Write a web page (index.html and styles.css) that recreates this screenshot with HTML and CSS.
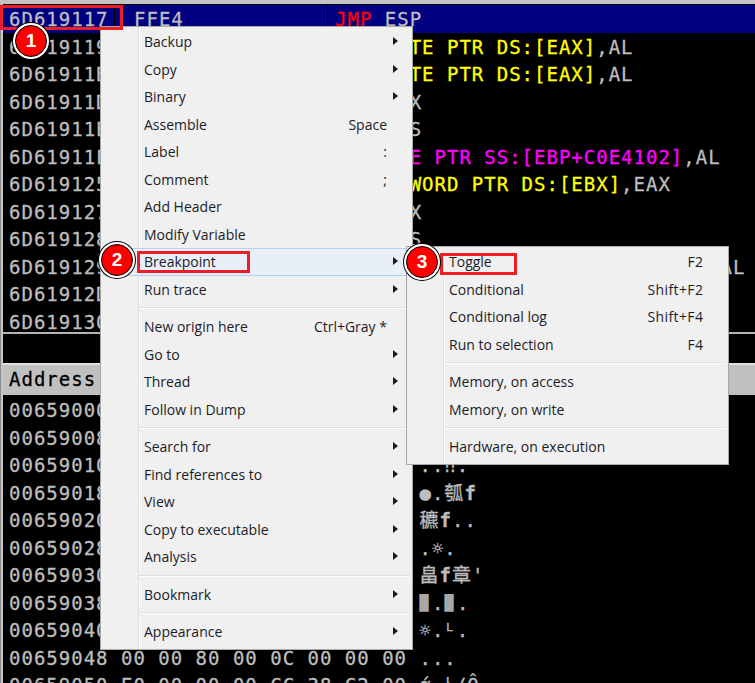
FILE: index.html
```html
<!DOCTYPE html>
<html lang="en">
<head>
<meta charset="utf-8">
<title>Debugger</title>
<link rel="stylesheet" href="styles.css">
</head>
<body>
<main class="window">
  <section class="cpu">
    <div class="row selected"><span class="addr">6D619117</span><span class="hex">FFE4</span><span class="asm"><span class="red">JMP</span> ESP</span></div>
    <div class="row"><span class="addr">6D619119</span><span class="hex">0000</span><span class="asm"><span class="yel">ADD BYTE PTR DS:[EAX]</span>,AL</span></div>
    <div class="row"><span class="addr">6D61911B</span><span class="hex">0000</span><span class="asm"><span class="yel">ADD BYTE PTR DS:[EAX]</span>,AL</span></div>
    <div class="row"><span class="addr">6D61911D</span><span class="hex">40</span><span class="asm">INC EAX</span></div>
    <div class="row"><span class="addr">6D61911E</span><span class="hex">06</span><span class="asm">PUSH ES</span></div>
    <div class="row"><span class="addr">6D61911F</span><span class="hex">0885 02418EC0</span><span class="asm"><span class="mag">OR BYTE PTR SS:[EBP+C0E4102]</span>,AL</span></div>
    <div class="row"><span class="addr">6D619125</span><span class="hex">8503</span><span class="asm"><span class="yel">TEST DWORD PTR DS:[EBX]</span>,EAX</span></div>
    <div class="row"><span class="addr">6D619127</span><span class="hex">40</span><span class="asm">INC EAX</span></div>
    <div class="row"><span class="addr">6D619128</span><span class="hex">06</span><span class="asm">PUSH ES</span></div>
    <div class="row"><span class="addr">6D619129</span><span class="hex">0885 02418EC0</span><span class="asm"><span class="mag">ADD BYTE PTR SS:[EBP+C0E41020]</span>,AL</span></div>
    <div class="row"><span class="addr">6D61912D</span><span class="hex">0000</span><span class="asm"></span></div>
    <div class="row"><span class="addr">6D619130</span><span class="hex">0000</span><span class="asm"></span></div>
  </section>
  <div class="spacer"></div>
  <header class="dump-head">Address</header>
  <section class="dump">
    <div class="line">00659000 00 00 00 00 00 00 00 00 ........</div>
    <div class="line">00659008 00 00 00 00 00 00 00 00 ........</div>
    <div class="line">00659010 00 00 00 00 00 00 00 00 ..‼.</div>
    <div class="line">00659018 00 00 00 00 00 00 00 00 ●.瓠<b class="wide">f</b></div>
    <div class="line">00659020 00 00 00 00 00 00 00 00 穮<b class="wide">f</b>..</div>
    <div class="line">00659028 00 00 00 00 00 00 00 00 .☼.</div>
    <div class="line">00659030 00 00 00 00 00 00 00 00 畠<b class="wide">f</b>章'</div>
    <div class="line">00659038 00 00 00 00 00 00 00 00 <span class="blk">█</span>.<span class="blk">█</span>.</div>
    <div class="line">00659040 00 00 00 00 00 00 00 00 ☼.ᴸ.</div>
    <div class="line">00659048 00 00 80 00 0C 00 00 00 ...</div>
    <div class="line">00659050 E0 00 00 00 CC 38 C2 00 ά.ﾄ/Ô</div>
  </section>
</main>

<nav class="menu main-menu">
  <div class="item"><span class="label">Backup</span><i class="arrow"></i></div>
  <div class="item"><span class="label">Copy</span><i class="arrow"></i></div>
  <div class="item"><span class="label">Binary</span><i class="arrow"></i></div>
  <div class="item"><span class="label">Assemble</span><span class="key">Space</span></div>
  <div class="item"><span class="label">Label</span><span class="key">:</span></div>
  <div class="item"><span class="label">Comment</span><span class="key">;</span></div>
  <div class="item"><span class="label">Add Header</span></div>
  <div class="item"><span class="label">Modify Variable</span></div>
  <div class="item active"><span class="label">Breakpoint</span><i class="arrow"></i></div>
  <div class="item"><span class="label">Run trace</span><i class="arrow"></i></div>
  <div class="sep"></div>
  <div class="item"><span class="label">New origin here</span><span class="key">Ctrl+Gray *</span></div>
  <div class="item"><span class="label">Go to</span><i class="arrow"></i></div>
  <div class="item"><span class="label">Thread</span><i class="arrow"></i></div>
  <div class="item"><span class="label">Follow in Dump</span><i class="arrow"></i></div>
  <div class="sep"></div>
  <div class="item"><span class="label">Search for</span><i class="arrow"></i></div>
  <div class="item"><span class="label">Find references to</span><i class="arrow"></i></div>
  <div class="item"><span class="label">View</span><i class="arrow"></i></div>
  <div class="item"><span class="label">Copy to executable</span><i class="arrow"></i></div>
  <div class="item"><span class="label">Analysis</span><i class="arrow"></i></div>
  <div class="sep"></div>
  <div class="item"><span class="label">Bookmark</span><i class="arrow"></i></div>
  <div class="sep"></div>
  <div class="item"><span class="label">Appearance</span><i class="arrow"></i></div>
</nav>

<nav class="menu sub-menu">
  <div class="item"><span class="label">Toggle</span><span class="key">F2</span></div>
  <div class="item"><span class="label">Conditional</span><span class="key">Shift+F2</span></div>
  <div class="item"><span class="label">Conditional log</span><span class="key">Shift+F4</span></div>
  <div class="item"><span class="label">Run to selection</span><span class="key">F4</span></div>
  <div class="sep"></div>
  <div class="item"><span class="label">Memory, on access</span></div>
  <div class="item"><span class="label">Memory, on write</span></div>
  <div class="sep"></div>
  <div class="item"><span class="label">Hardware, on execution</span></div>
</nav>

<div class="box box-1"></div>
<div class="box box-2"></div>
<div class="box box-3"></div>
<div class="badge badge-1">1</div>
<div class="badge badge-2">2</div>
<div class="badge badge-3">3</div>
</body>
</html>
```

FILE: styles.css
```css
html, body {
  margin: 0;
  padding: 0;
  height: 683px;
  overflow: hidden;
  background: #000;
}

body {
  position: relative;
  width: 755px;
}

.window {
  height: 683px;
  box-sizing: border-box;
  padding-left: 3px;
  border-top: 4px solid #c4c4c4;
  background: #000;
  box-shadow: inset 1px 0 0 #8a8a8a, inset 3px 0 0 #c8c8c8;
  display: flex;
  flex-direction: column;
  font-family: "DejaVu Sans Mono", monospace;
  font-size: 19px;
  letter-spacing: 1px;
  -webkit-text-stroke: 0.3px currentColor;
  color: #bdbdbd;
  overflow: hidden;
}

.cpu {
  flex: none;
  height: 327px;
  margin-top: 1px;
  overflow: hidden;
  border-bottom: 2px solid #b4b4b4;
}

.row {
  height: 27.5px;
  line-height: 29.5px;
  padding-left: 6px;
  display: grid;
  grid-template-columns: 125px 201px 1fr;
  white-space: pre;
}

.row.selected {
  background: #000080;
  background-image:
    linear-gradient(#000, #000),
    linear-gradient(#000, #000);
  background-repeat: no-repeat;
  background-size: 1px 100%, 1px 100%;
  background-position: 111px 0, 324px 0;
}

.red { color: #ff0000; }
.yel { color: #ffff00; }
.mag { color: #ff00ff; }

.spacer {
  flex: none;
  height: 29px;
  border-bottom: 2px solid #e2e2e2;
}

.dump-head {
  flex: none;
  height: 30px;
  line-height: 28px;
  padding-left: 6px;
  background: #c0c0c0;
  color: #000;
}

.dump {
  padding: 3px 0 0 6px;
}

.line {
  height: 27.5px;
  line-height: 25.5px;
  white-space: pre;
  font-family: "DejaVu Sans Mono", "Noto Sans CJK SC", monospace;
}

.wide {
  font-weight: bold;
}

.blk {
  font-size: 15px;
  letter-spacing: 3.44px;
  vertical-align: 2px;
  -webkit-text-stroke: 0;
  color: #a8a8a8;
}

.menu {
  position: absolute;
  box-sizing: border-box;
  background-color: #f0f0f0;
  border: 1px solid #a8a8a8;
  padding: 1px 2px;
  font-family: "Open Sans", sans-serif;
  font-size: 14px;
  color: #1c1c28;
  background-repeat: no-repeat;
  background-image: linear-gradient(to right, #e0e0e0 1px, #fff 1px);
  background-size: 2px 100%;
}

.main-menu {
  left: 100px;
  top: 26px;
  width: 313px;
  height: 624px;
  background-position: 37px 0;
}

.sub-menu {
  left: 406px;
  top: 246px;
  width: 323px;
  height: 219px;
  background-position: 36px 0;
}

.item {
  height: 27.5px;
  display: flex;
  align-items: center;
  box-sizing: border-box;
  padding-left: 41px;
  position: relative;
}

.sub-menu .item {
  padding-left: 40px;
}

.label {
  flex: 1;
}

.key {
  padding-right: 23px;
}

.sub-menu .key {
  letter-spacing: 0.4px;
  padding-right: 22.6px;
}

.arrow {
  position: absolute;
  right: 12px;
  top: 9px;
  width: 0;
  height: 0;
  border-left: 5px solid #1a1a1a;
  border-top: 4.5px solid transparent;
  border-bottom: 4.5px solid transparent;
}

.item.active {
  background: #e8eff8;
  box-shadow: inset 0 0 0 1px #b4d2f4;
  border-radius: 2px;
}

.sep {
  height: 10px;
  margin-left: 36px;
  background: linear-gradient(#f0f0f0 4px, #e0e0e0 4px, #e0e0e0 5px, #fff 5px, #fff 6px, #f0f0f0 6px);
}

.box {
  position: absolute;
  box-sizing: border-box;
  border: 3px solid #ee1c25;
}

.box-1 { left: 0; top: 5px; width: 123px; height: 25px; }
.box-2 { left: 137px; top: 251px; width: 113px; height: 22px; }
.box-3 { left: 440px; top: 253px; width: 77px; height: 22px; }

.badge {
  position: absolute;
  box-sizing: border-box;
  width: 32px;
  height: 32px;
  border-radius: 50%;
  background: #ff0000;
  border: 1px solid #000;
  box-shadow: 0 0 0 2px #fff, 0 0 0 3px #000;
  color: #fff;
  font-family: "Liberation Sans", sans-serif;
  font-weight: bold;
  font-size: 19px;
  line-height: 30px;
  text-align: center;
}

.badge-1 { left: 15px; top: 25px; }
.badge-2 { left: 101px; top: 244px; }
.badge-3 { left: 406px; top: 246px; }
```
